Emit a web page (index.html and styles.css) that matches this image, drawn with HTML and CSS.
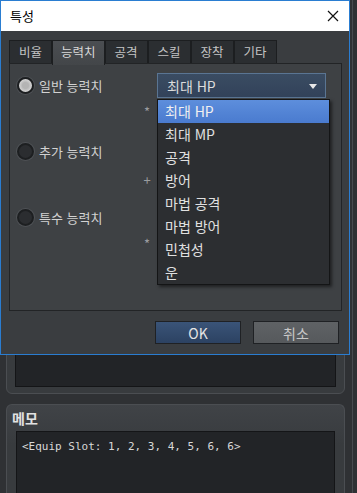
FILE: index.html
```html
<!DOCTYPE html>
<html lang="ko">
<head>
    <meta charset="UTF-8">
    <meta name="viewport" content="width=device-width, initial-scale=1.0">
    <title>특성</title>
    <link rel="stylesheet" href="styles.css">
</head>
<body>
    <div class="app">
        <div class="group group-top">
            <div class="field"></div>
        </div>
        <div class="group group-memo">
            <div class="group-title">메모</div>
            <div class="field memo">&lt;Equip Slot: 1, 2, 3, 4, 5, 6, 6&gt;</div>
        </div>
    </div>

    <div class="dialog">
        <div class="titlebar">
            <span class="title">특성</span>
            <svg class="close" width="12" height="12" viewBox="0 0 12 12">
                <path d="M1 1 L11 11 M11 1 L1 11" stroke="#111" stroke-width="1.2" fill="none"/>
            </svg>
        </div>
        <div class="dialog-body">
            <div class="tabs">
                <div class="tab">비율</div>
                <div class="tab active">능력치</div>
                <div class="tab">공격</div>
                <div class="tab">스킬</div>
                <div class="tab">장착</div>
                <div class="tab">기타</div>
            </div>
            <div class="pane">
                <div class="section">
                    <div class="radio checked"><span class="dot"></span>일반 능력치</div>
                    <div class="select">
                        <span>최대 HP</span>
                        <svg class="arrow" width="8" height="5" viewBox="0 0 8 5"><path d="M0 0 L8 0 L4 5 Z" fill="#e8e8e8"/></svg>
                        <ul class="dropdown">
                            <li class="selected">최대 HP</li>
                            <li>최대 MP</li>
                            <li>공격</li>
                            <li>방어</li>
                            <li>마법 공격</li>
                            <li>마법 방어</li>
                            <li>민첩성</li>
                            <li>운</li>
                        </ul>
                    </div>
                    <div class="mark">*</div>
                </div>
                <div class="section">
                    <div class="radio"><span class="dot"></span>추가 능력치</div>
                    <div class="mark mark-low">+</div>
                </div>
                <div class="section">
                    <div class="radio"><span class="dot"></span>특수 능력치</div>
                    <div class="mark">*</div>
                </div>
            </div>
            <div class="buttons">
                <button class="btn btn-ok">OK</button>
                <button class="btn">취소</button>
            </div>
        </div>
    </div>
</body>
</html>
```

FILE: styles.css
```css
body {
    margin: 0;
    width: 357px;
    height: 493px;
    overflow: hidden;
    background-color: #2f3134;
    font-family: "Noto Sans CJK KR", "Noto Sans", sans-serif;
    color: #d6d6d6;
}

/* app behind the dialog */
.app {
    width: 353px;
    height: 493px;
    box-sizing: border-box;
    padding: 290px 7px 0 6px;
    border-right: 1px solid #484b4f;
    display: flex;
    flex-direction: column;
    gap: 10px;
}
.group {
    flex-shrink: 0;
    box-sizing: border-box;
    border: 1px solid #4b4e52;
    border-radius: 6px;
    background: linear-gradient(#404347, #383b3e 40px);
    padding: 0 9px;
}
.group-top {
    height: 104px;
    padding: 0 8px 6px 8px;
    display: flex;
    flex-direction: column;
    justify-content: flex-end;
}
.group-top .field {
    height: 40px;
}
.group-memo {
    flex: 1;
    min-height: 0;
    display: flex;
    flex-direction: column;
    border-bottom: none;
    border-radius: 6px 6px 0 0;
}
.group-title {
    font-size: 14px;
    font-weight: bold;
    line-height: 18px;
    padding: 4px 0;
    margin-left: -4px;
    color: #e2e2e2;
}
.field {
    background-color: #222427;
    border: 1px solid #141517;
}
.memo {
    flex: 1;
    border-bottom: none;
    padding: 8px 5px 0 5px;
    font-family: "DejaVu Sans Mono", monospace;
    font-size: 11px;
    line-height: 14px;
    color: #d8d8d8;
}

/* dialog */
.dialog {
    position: absolute;
    left: 0;
    top: 0;
    width: 350px;
    height: 355px;
    box-sizing: border-box;
    border: 1px solid #2a7dd1;
    background-color: #3a3d40;
    display: flex;
    flex-direction: column;
}
.titlebar {
    flex-shrink: 0;
    height: 30px;
    background-color: #fff;
    display: flex;
    align-items: center;
    justify-content: space-between;
    padding: 0 10px 0 9px;
}
.title {
    font-size: 13px;
    color: #000;
    line-height: 16px;
}
.dialog-body {
    padding: 9px 7px 10px 8px;
}
.tabs {
    display: flex;
    height: 23px;
    position: relative;
    z-index: 1;
}
.tab {
    padding: 0 9px;
    border: 1px solid #1c1e20;
    border-bottom: none;
    background-color: #2b2e31;
    font-size: 12.5px;
    line-height: 22px;
    color: #c4c4c4;
}
.tab.active {
    padding: 0 8px;
    background: linear-gradient(#4b4e52, #434649);
    height: 24px;
    color: #dadada;
}
.pane {
    height: 248px;
    box-sizing: border-box;
    border: 1px solid #222426;
    background-color: #3e4144;
    padding: 9px 0 0 7px;
}
.section {
    display: grid;
    grid-template-columns: 124px 12px 173px;
    grid-template-rows: 25px 28px;
    margin-bottom: 13px;
}
.radio {
    grid-column: 1;
    grid-row: 1;
    display: flex;
    align-items: center;
    gap: 5px;
    font-size: 13px;
    line-height: 18px;
    color: #d2d2d2;
}
.dot {
    width: 13px;
    height: 13px;
    border-radius: 50%;
    border: 2px solid #1d1f21;
    background-color: #2b2d30;
    box-shadow: 0 0 0 1px #4e5155;
}
.radio.checked .dot {
    background: radial-gradient(circle, #b4b4b4 0 3px, #d2d2d2 6px);
}
.mark {
    grid-column: 2;
    grid-row: 2;
    text-align: center;
    font-size: 13px;
    line-height: 28px;
    color: #9a9da0;
}
.mark-low {
    padding-top: 2px;
}
.select {
    grid-column: 3;
    grid-row: 1;
    margin-left: 4px;
    position: relative;
    border: 1px solid #5a7593;
    background: linear-gradient(#3a4c62, #32425a);
    display: flex;
    align-items: center;
    justify-content: space-between;
    padding: 0 8px 0 9px;
    font-size: 14px;
    line-height: 20px;
    color: #dcdcdc;
}
.arrow {
    margin-top: 1px;
}
.dropdown {
    position: absolute;
    left: -1px;
    top: 25px;
    width: 171px;
    margin: 0;
    padding: 0;
    list-style: none;
    background-color: #2c2e31;
    border: 1px solid #141516;
    box-shadow: 2px 2px 3px rgba(0, 0, 0, 0.5);
    z-index: 2;
}
.dropdown li {
    height: 23px;
    line-height: 23px;
    padding-left: 7px;
    font-size: 14px;
    color: #e0e0e0;
}
.dropdown li.selected {
    background: linear-gradient(#5d8edc, #4a7bcf);
    color: #f0f0f0;
}
.buttons {
    display: flex;
    justify-content: flex-end;
    gap: 12px;
    margin: 10px 3px 0 0;
}
.btn {
    width: 86px;
    height: 23px;
    padding: 0;
    border: 1px solid #1f2124;
    background: linear-gradient(#5f6265, #56595c);
    font-family: "Noto Sans CJK KR", "Liberation Sans", sans-serif;
    font-size: 14px;
    line-height: 20px;
    color: #c8c8c8;
}
.btn-ok {
    background: linear-gradient(#3a5478, #2c4262);
    color: #e4e4e4;
}
```
